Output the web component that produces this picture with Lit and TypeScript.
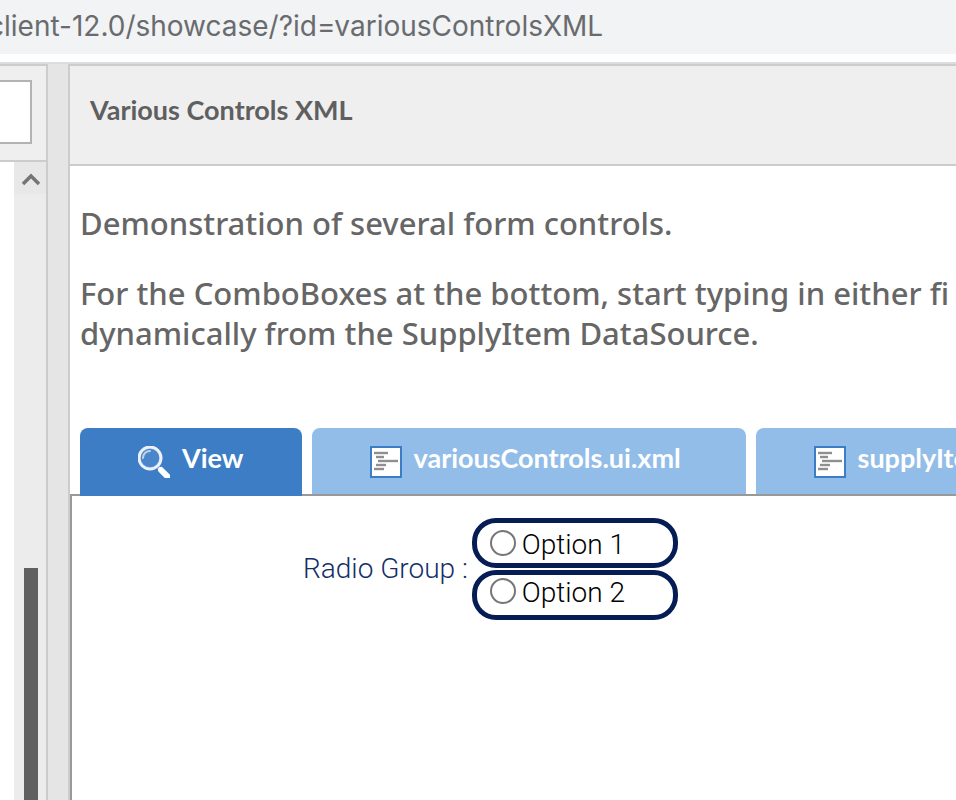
import { LitElement, html, css, svg } from "lit";
import { customElement, state } from "lit/decorators.js";

const magnifier = html`<svg class="icon" viewBox="0 0 32 32" aria-hidden="true">
  <circle cx="12" cy="12" r="11" fill="#6a9ad2" stroke="#ecf1fa" stroke-width="3" />
  <circle cx="12" cy="12" r="9" fill="#4a86ca" />
  <path d="M5 12C5 8 8 5 12 5" fill="none" stroke="#bdd2ec" stroke-width="2" stroke-linecap="round" />
  <path d="M20 21l3 3" stroke="#9dbde4" stroke-width="3" />
  <path d="M23 24l7 7" stroke="#fff" stroke-width="6" stroke-linecap="round" />
</svg>`;

const bars = [
  [4, 18, 7],
  [6, 14, 11],
  [8, 28, 15],
  [6, 16, 19],
  [4, 14, 23],
];
const sourceFile = html`<svg class="icon" viewBox="0 0 32 32" aria-hidden="true">
  <rect x="1" y="1" width="30" height="30" fill="#fff" stroke="#3c7dc5" stroke-width="2" />
  ${bars.map(([a, b, y]) => svg`<path d=${`M${a} ${y}H${b}`} stroke="#8f8f8f" stroke-width="2.4" />`)}
</svg>`;

const tabs = [
  { label: "View", icon: magnifier, kind: "" },
  { label: "variousControls.ui.xml", icon: sourceFile, kind: "source" },
  { label: "supplyItem.ds.xml", icon: sourceFile, kind: "source" },
];

@customElement("app-root")
export class AppRoot extends LitElement {
  static styles = css`
    :host {
      display: flex;
      flex-direction: column;
      min-height: 100vh;
      overflow: hidden;
      background: #fff;
      color: #666;
      font-family: "Noto Sans", "Open Sans", sans-serif;
    }
    * { box-sizing: border-box; }
    .toolbar {
      padding-bottom: 8px;
      border-bottom: 2px solid #dadce0;
    }
    .address {
      display: block;
      width: 100%;
      height: 54px;
      padding: 0 0 2px;
      border: 0;
      outline: 0;
      background: #f1f3f4;
      color: #696b6e;
      font: 400 28px Inter, sans-serif;
      text-indent: -12px;
    }
    .workspace { flex: 1; display: flex; background: #e5e5e5; }
    .side {
      flex: none;
      width: 48px;
      display: flex;
      flex-direction: column;
      border: solid #ccc;
      border-width: 2px 2px 0 0;
    }
    .search {
      padding: 14px 14px 16px 0;
      border-bottom: 2px solid #ccc;
      background: #efefef;
    }
    .searchbox {
      display: block;
      width: 100%;
      height: 64px;
      border: 2px solid #b3b3b3;
      border-left: 0;
      background: #fff;
      outline: 0;
    }
    .list { flex: 1; display: flex; justify-content: flex-end; background: #fff; }
    .scroll {
      width: 32px;
      display: flex;
      flex-direction: column;
      align-items: flex-end;
      padding-right: 8px;
      background: #ececec;
    }
    .up {
      width: 32px;
      height: 32px;
      margin-right: -8px;
      padding: 0;
      border: 0;
      background: #e8e8e8;
    }
    .up svg { display: block; }
    .track { flex: 1; width: 14px; display: flex; flex-direction: column; }
    .before { flex: 374; }
    .thumb { flex: 232; background: #606060; }
    .main {
      flex: 1;
      min-width: 0;
      margin-left: 20px;
      display: flex;
      flex-direction: column;
      border: solid #ccc;
      border-width: 2px 0 0 2px;
      background: #fff;
    }
    .title {
      margin: 0;
      padding: 24px 20px 34px;
      border-bottom: 2px solid #ccc;
      background: #efefef;
      color: #5f5f5f;
      font: 700 27px/40px Lato, sans-serif;
      white-space: nowrap;
    }
    .intro {
      padding: 37px 0 75px 10px;
      font-size: 31px;
      font-weight: 500;
      line-height: 40px;
      white-space: nowrap;
    }
    .intro p { margin: 0 0 30px; }
    .intro p:last-child { margin: 0; }
    .tabs { display: flex; align-items: flex-start; gap: 10px; padding-left: 10px; }
    .tab {
      flex: none;
      display: flex;
      align-items: flex-start;
      gap: 12px;
      height: 66px;
      padding: 10px 58px 0;
      border: 0;
      border-radius: 8px 8px 0 0;
      background: #91bde8;
      color: #fff;
      font: 700 27px/40px Lato, sans-serif;
    }
    .tab.source { min-width: 434px; }
    .tab.active { height: 68px; margin-bottom: -2px; background: #3c7dc5; z-index: 1; }
    .icon { flex: none; width: 32px; height: 32px; margin-top: 8px; }
    .panel {
      flex: 1;
      padding: 22px 0 0 231px;
      border: solid #999;
      border-width: 2px 0 0 2px;
    }
    .group {
      display: flex;
      align-items: center;
      gap: 4px;
      color: #132f69;
      font: 300 28px/40px Roboto, sans-serif;
      white-space: nowrap;
    }
    .options { display: flex; flex-direction: column; gap: 2px; width: 206px; }
    .option {
      display: flex;
      align-items: center;
      gap: 6px;
      height: 50px;
      padding-left: 13px;
      border: 5px solid #051c54;
      border-radius: 24px;
      color: #000;
    }
    .option:last-child { padding-bottom: 8px; }
    .option span { padding-top: 3px; }
    .radio {
      appearance: none;
      flex: none;
      width: 26px;
      height: 26px;
      margin: 0;
      border: 2px solid #767676;
      border-radius: 50%;
      background: #fff;
    }
    .radio:checked { background: radial-gradient(#0a66d8 0 6px, #fff 7px); }
  `;

  @state() private active = 0;

  render() {
    return html`
      <header class="toolbar">
        <input class="address" aria-label="Address" value="client-12.0/showcase/?id=variousControlsXML" />
      </header>
      <div class="workspace">
        <aside class="side">
          <div class="search"><input class="searchbox" aria-label="Search" /></div>
          <div class="list">
            <div class="scroll">
              <button class="up" aria-label="Scroll up">
                <svg width="32" height="32" viewBox="0 0 32 32">
                  <path d="M9 22l8-8 8 8" fill="none" stroke="#757575" stroke-width="3.5" />
                </svg>
              </button>
              <div class="track"><div class="before"></div><div class="thumb"></div></div>
            </div>
          </div>
        </aside>
        <main class="main">
          <h1 class="title">Various Controls XML</h1>
          <div class="intro">
            <p>Demonstration of several form controls.</p>
            <p>For the ComboBoxes at the bottom, start typing in either fi<br />dynamically from the SupplyItem DataSource.</p>
          </div>
          <div class="tabs" role="tablist">
            ${tabs.map(
              (tab, i) => html`<button
                class="tab ${tab.kind} ${i === this.active ? "active" : ""}"
                role="tab"
                aria-selected=${i === this.active}
                @click=${() => (this.active = i)}
              >${tab.icon}<span>${tab.label}</span></button>`
            )}
          </div>
          <section class="panel">
            <div class="group" role="radiogroup" aria-labelledby="group-label">
              <span id="group-label">Radio Group :</span>
              <div class="options">
                ${[1, 2].map(
                  (n) => html`<label class="option"><input class="radio" type="radio" name="option" /><span>Option ${n}</span></label>`
                )}
              </div>
            </div>
          </section>
        </main>
      </div>
    `;
  }
}
